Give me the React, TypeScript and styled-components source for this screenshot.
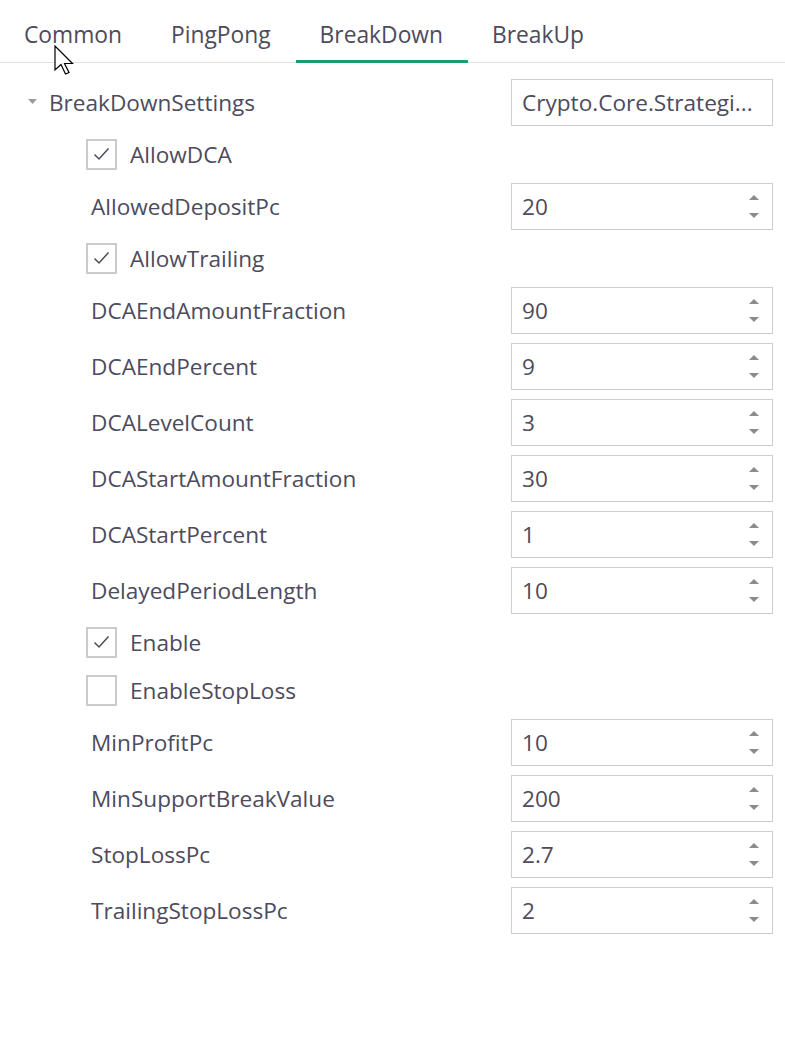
import React from "react";
import styled, { createGlobalStyle } from "styled-components";

const GlobalStyle = createGlobalStyle`
  html, body { margin: 0; padding: 0; background: #ffffff; }
  body {
    font-family: "Open Sans", "Noto Sans", "Liberation Sans", sans-serif;
    color: #4d4b5c;
    -webkit-font-smoothing: antialiased;
  }
`;

const Page = styled.div`
  position: relative;
  width: 785px;
  height: 1062px;
  overflow: hidden;
  background: #fff;
`;

const TabBar = styled.div`
  display: flex;
  border-bottom: 1px solid #e2e2e2;
  height: 62px;
`;

const Tab = styled.div<{ $active?: boolean }>`
  box-sizing: border-box;
  height: 63px;
  padding: 8px 25px 0 24px;
  display: flex;
  align-items: center;
  font-size: 22.8px;
  color: #4d4b5c;
  border-bottom: 3px solid ${(p) => (p.$active ? "#1b9e6d" : "transparent")};
`;

const Grid = styled.div`
  padding-top: 11px;
`;

const GroupRow = styled.div`
  height: 56px;
  display: flex;
  align-items: center;
  padding-left: 28px;
  padding-right: 12px;
`;

const Expander = styled.svg`
  width: 9px;
  height: 6px;
  margin-right: 12px;
  flex: none;
`;

const GroupLabel = styled.div`
  flex: 1;
  font-size: 22.6px;
`;

const PropRow = styled.div`
  height: 56px;
  display: flex;
  align-items: center;
  padding-left: 91px;
  padding-right: 12px;
`;

const Label = styled.div`
  flex: 1;
  font-size: 22.6px;
`;

const CheckRow = styled.div`
  height: 48px;
  display: flex;
  align-items: center;
  padding-left: 86px;
  gap: 13px;
`;

const Box = styled.div`
  box-sizing: border-box;
  width: 31px;
  height: 31px;
  border: 2px solid #cbcbcb;
  display: flex;
  align-items: center;
  justify-content: center;
`;

const Field = styled.div`
  box-sizing: border-box;
  width: 262px;
  height: 47px;
  border: 1px solid #cfcfcf;
  display: flex;
  align-items: center;
  padding-left: 10px;
  padding-right: 13px;
  font-size: 22.6px;
  background: #fff;
`;

const Value = styled.div`
  flex: 1;
  white-space: nowrap;
  overflow: hidden;
`;

const Spinner = styled.div`
  display: flex;
  flex-direction: column;
  justify-content: space-between;
  height: 23px;
`;

const Cursor = styled.svg`
  position: absolute;
  left: 54px;
  top: 45px;
  width: 26px;
  height: 36px;
  pointer-events: none;
`;

const Check = () => (
  <svg width="17" height="14" viewBox="0 0 17 14">
    <polyline points="1.5,7.5 6,12 15.5,1.5" fill="none" stroke="#4d4b5c" strokeWidth="1.5" />
  </svg>
);

const Arrow = ({ up }: { up?: boolean }) => (
  <svg width="10" height="5" viewBox="0 0 10 5">
    {up ? <polygon points="0,5 10,5 5,0" fill="#8a8a8f" /> : <polygon points="0,0 10,0 5,5" fill="#8a8a8f" />}
  </svg>
);

const NumberField = ({ value }: { value: string }) => (
  <Field>
    <Value>{value}</Value>
    <Spinner>
      <Arrow up />
      <Arrow />
    </Spinner>
  </Field>
);

type Item = { kind: "num"; name: string; value: string } | { kind: "bool"; name: string; checked: boolean };

const items: Item[] = [
  { kind: "bool", name: "AllowDCA", checked: true },
  { kind: "num", name: "AllowedDepositPc", value: "20" },
  { kind: "bool", name: "AllowTrailing", checked: true },
  { kind: "num", name: "DCAEndAmountFraction", value: "90" },
  { kind: "num", name: "DCAEndPercent", value: "9" },
  { kind: "num", name: "DCALevelCount", value: "3" },
  { kind: "num", name: "DCAStartAmountFraction", value: "30" },
  { kind: "num", name: "DCAStartPercent", value: "1" },
  { kind: "num", name: "DelayedPeriodLength", value: "10" },
  { kind: "bool", name: "Enable", checked: true },
  { kind: "bool", name: "EnableStopLoss", checked: false },
  { kind: "num", name: "MinProfitPc", value: "10" },
  { kind: "num", name: "MinSupportBreakValue", value: "200" },
  { kind: "num", name: "StopLossPc", value: "2.7" },
  { kind: "num", name: "TrailingStopLossPc", value: "2" },
];

const tabs = ["Common", "PingPong", "BreakDown", "BreakUp"];

export default function App() {
  return (
    <Page>
      <GlobalStyle />
      <TabBar>
        {tabs.map((t) => (
          <Tab key={t} $active={t === "BreakDown"}>
            {t}
          </Tab>
        ))}
      </TabBar>
      <Grid>
        <GroupRow>
          <Expander viewBox="0 0 9 6">
            <polygon points="0,0 9,0 4.5,5" fill="#9a9a9f" />
          </Expander>
          <GroupLabel>BreakDownSettings</GroupLabel>
          <Field>
            <Value>Crypto.Core.Strategi...</Value>
          </Field>
        </GroupRow>
        {items.map((it) =>
          it.kind === "bool" ? (
            <CheckRow key={it.name}>
              <Box>{it.checked && <Check />}</Box>
              <Label>{it.name}</Label>
            </CheckRow>
          ) : (
            <PropRow key={it.name}>
              <Label>{it.name}</Label>
              <NumberField value={it.value} />
            </PropRow>
          )
        )}
      </Grid>
      <Cursor viewBox="0 0 26 36">
        <path d="M1,1 L1,25 L7,19.5 L11.5,29 L15,27.5 L10.5,18.5 L18.5,18.5 Z" fill="#fff" stroke="#000" strokeWidth="1.2" strokeLinejoin="miter" />
      </Cursor>
    </Page>
  );
}
